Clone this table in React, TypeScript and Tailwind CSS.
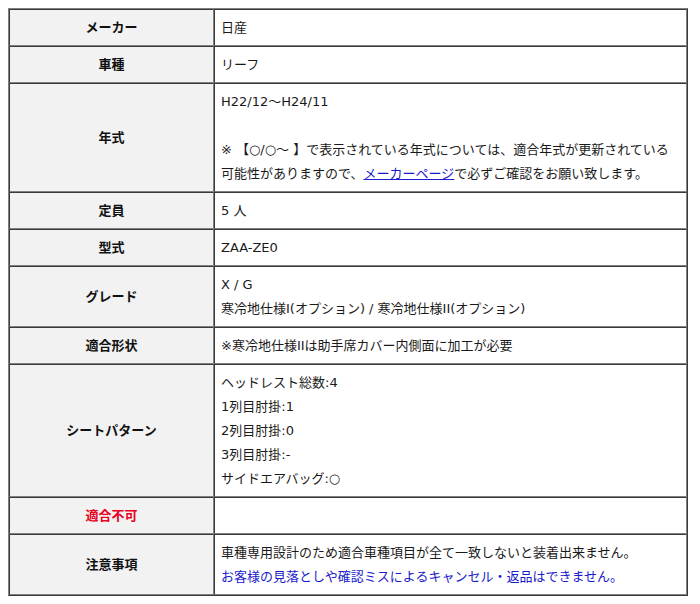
import React from "react";

const font = { fontFamily: '"DejaVu Sans", "Noto Sans CJK JP", sans-serif' };

function L({ children, className = "" }: { children?: React.ReactNode; className?: string }) {
  return <div className={`h-[24px] leading-[24px] whitespace-nowrap overflow-visible ${className}`}>{children}</div>;
}

function Row({ label, children, red }: { label: string; children?: React.ReactNode; red?: boolean }) {
  return (
    <tr>
      <th
        className={`w-[205px] bg-[#f2f2f2] text-center align-middle font-bold px-[6px] pt-[6px] pb-[5px] border border-t-[#3a3a3a] border-l-[#3a3a3a] border-b-[#808080] border-r-[#808080] ${red ? "text-[#e8001c]" : "text-[#111]"}`}
      >
        <L>{label}</L>
      </th>
      <td className="bg-white text-left align-middle px-[6px] pt-[6px] pb-[5px] border border-t-[#3a3a3a] border-l-[#3a3a3a] border-b-[#808080] border-r-[#808080] text-[#1a1a1a]">
        {children}
      </td>
    </tr>
  );
}

export default function App() {
  return (
    <div className="bg-white w-[700px] h-[604px] pt-2 pl-2" style={font}>
      <table className="w-[680px] table-fixed border-separate border-spacing-0 text-[13px] leading-[24px] border border-t-[#808080] border-l-[#808080] border-b-[#3a3a3a] border-r-[#3a3a3a]">
        <tbody>
          <Row label="メーカー">
            <L>日産</L>
          </Row>
          <Row label="車種">
            <L>リーフ</L>
          </Row>
          <Row label="年式">
            <L>H22/12～H24/11</L>
            <L />
            <L>※ 【○/○～ 】で表示されている年式については、適合年式が更新されている</L>
            <L>
              可能性がありますので、
              <a href="#" className="text-[#1a1acc] underline">
                メーカーページ
              </a>
              で必ずご確認をお願い致します。
            </L>
          </Row>
          <Row label="定員">
            <L>5 人</L>
          </Row>
          <Row label="型式">
            <L>ZAA-ZE0</L>
          </Row>
          <Row label="グレード">
            <L>X / G</L>
            <L>寒冷地仕様I(オプション) / 寒冷地仕様II(オプション)</L>
          </Row>
          <Row label="適合形状">
            <L>※寒冷地仕様IIは助手席カバー内側面に加工が必要</L>
          </Row>
          <Row label="シートパターン">
            <L>ヘッドレスト総数:4</L>
            <L>1列目肘掛:1</L>
            <L>2列目肘掛:0</L>
            <L>3列目肘掛:-</L>
            <L>サイドエアバッグ:○</L>
          </Row>
          <Row label="適合不可" red>
            <L />
          </Row>
          <Row label="注意事項">
            <L>車種専用設計のため適合車種項目が全て一致しないと装着出来ません。</L>
            <L className="text-[#1a1acc]">お客様の見落としや確認ミスによるキャンセル・返品はできません。</L>
          </Row>
        </tbody>
      </table>
    </div>
  );
}
